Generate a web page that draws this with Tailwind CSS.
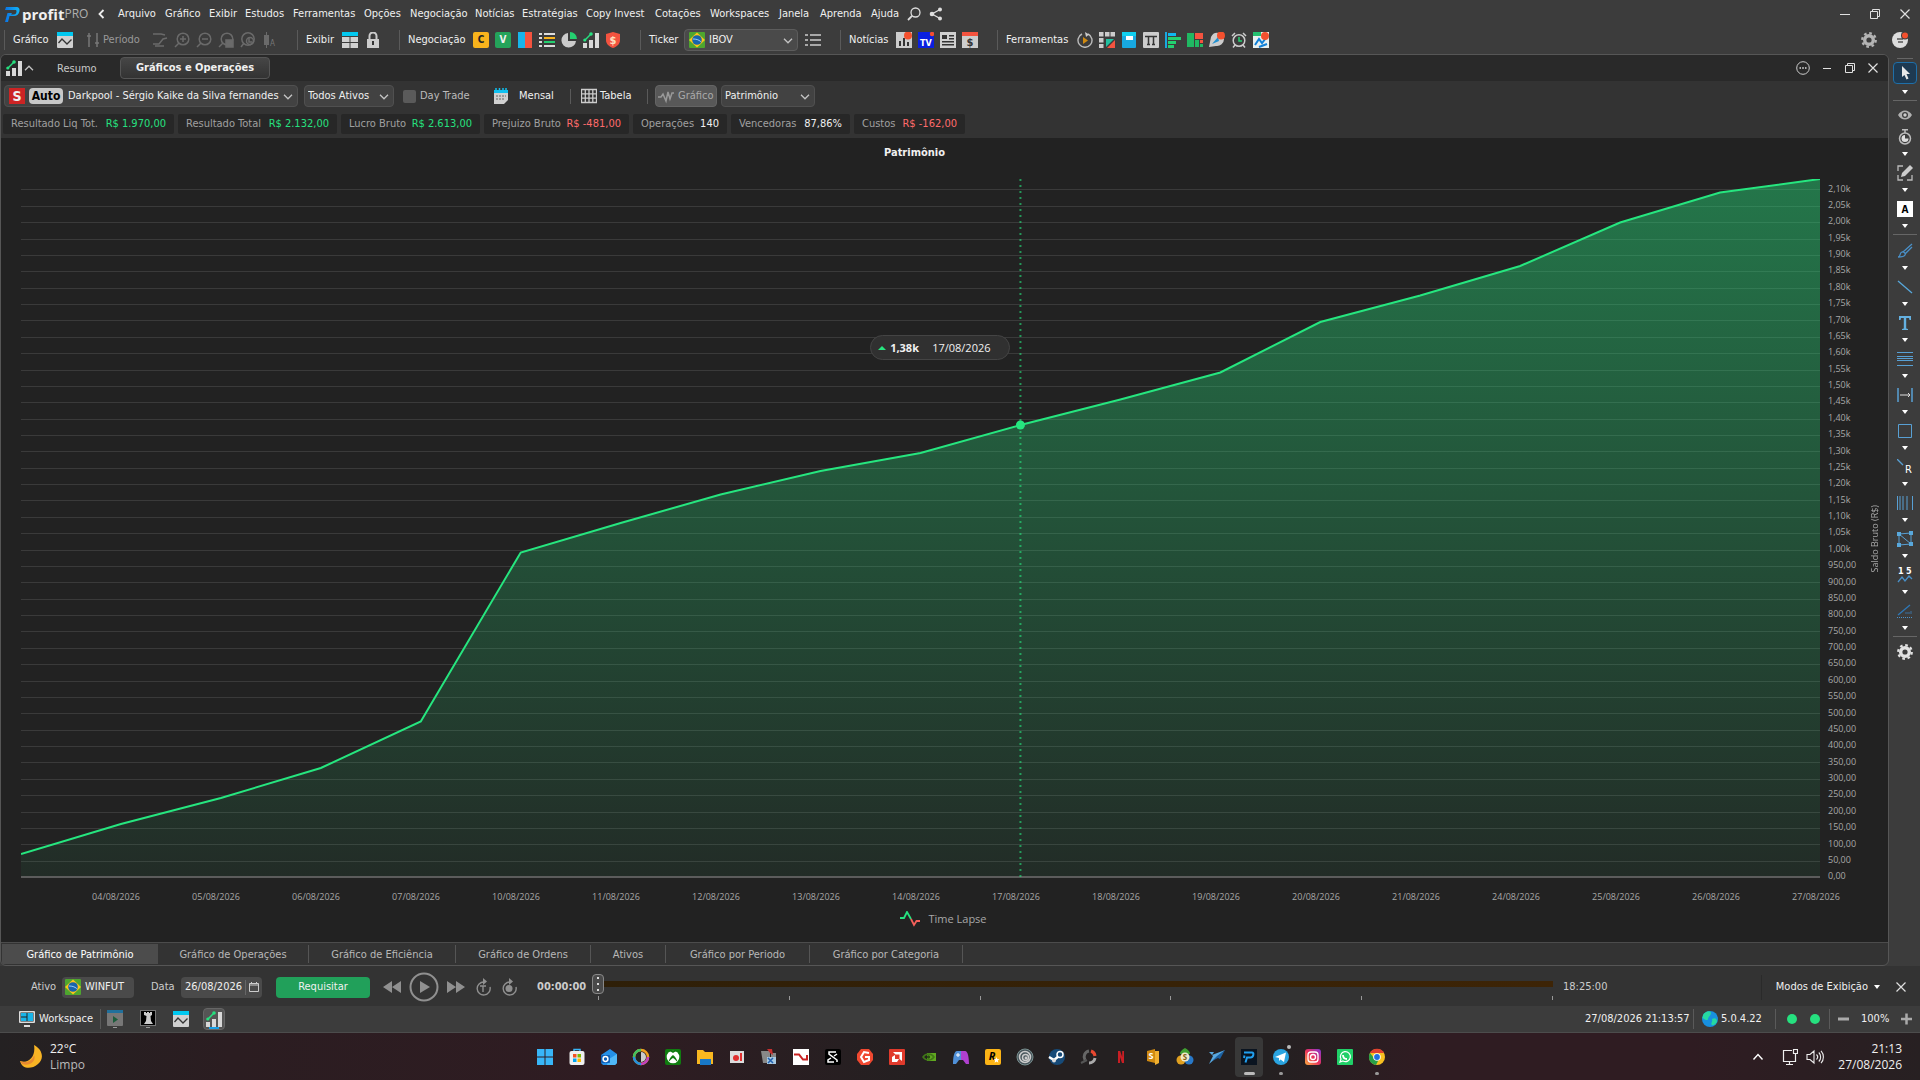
<!DOCTYPE html>
<html lang="pt-BR">
<head>
<meta charset="utf-8">
<title>Profit Pro</title>
<script src="https://cdn.jsdelivr.net/npm/@tailwindcss/browser@4"></script>
</head>
<body class="flex h-screen flex-col overflow-hidden bg-[#3c3c3c] font-['DejaVu_Sans_Condensed','DejaVu_Sans',sans-serif] text-[11px] leading-4 text-[#f0f0f0] whitespace-nowrap [&_svg]:shrink-0">

<svg class="absolute size-0">
  <symbol id="caret" viewBox="0 0 6 4"><path d="M0 0h6L3 4z" fill="#fff"/></symbol>
  <symbol id="chev" viewBox="0 0 10 6"><path d="M1 .8 5 4.8 9 .8" fill="none" stroke="#c4c4c4" stroke-width="1.3"/></symbol>
  <symbol id="flag" viewBox="0 0 16 16"><rect width="16" height="16" rx="1" fill="#4ea62f"/><path d="M8 .5 16 8l-8 7.500L0 8z" fill="#fcc419"/><circle cx="8" cy="8" r="4.800" fill="#1864ab"/><path d="M4 7c3 0 5.500.6 7.800 2.600" stroke="#9cf" fill="none"/></symbol>
  <symbol id="bars" viewBox="0 0 16 16"><path d="M0 11h4v5H0zM6 8h4v8H6zM12 1h4v15h-4z" fill="#d8d8d8"/><path d="M1.500 8.500 7.500 2.500" stroke="#26e07f" stroke-width="1.500"/><circle cx="1.800" cy="8" r="1.600" fill="#26e07f"/><circle cx="8" cy="2" r="1.800" fill="#26e07f"/></symbol>
  <symbol id="wave" viewBox="0 0 16 16"><rect width="16" height="16" rx="1" fill="#d0d0d0"/><path d="M0 0h16v4H0z" fill="#00c8f0"/><path d="M1.500 11 5 7l5 5 4.500-4.500" stroke="#333" stroke-width="1.300" fill="none"/></symbol>
  <symbol id="restore" viewBox="0 0 12 12"><path d="M1.500 3.500h7v7h-7zM3.500 3.500v-2h7v7h-2" fill="none" stroke="#e0e0e0"/></symbol>
  <symbol id="close" viewBox="0 0 12 12"><path d="m1.500 1.500 9 9m0-9-9 9" stroke="#e0e0e0" stroke-width="1.200"/></symbol>
  <symbol id="gear" viewBox="0 0 16 16"><circle cx="8" cy="8" r="4.300" fill="none" stroke="#b4b4b4" stroke-width="3.400"/><circle cx="8" cy="8" r="6.800" fill="none" stroke="#b4b4b4" stroke-width="2.200" stroke-dasharray="2.670"/></symbol>
  <linearGradient id="logo" x1="0" y1="0" x2="1" y2="0"><stop offset="0" stop-color="#0b74e5"/><stop offset="1" stop-color="#12b5f5"/></linearGradient>
</svg>

<!-- Menu bar -->
<header class="flex h-[27px] shrink-0 items-center pt-px">
  <svg class="ml-1 size-4" viewBox="0 0 16 16"><path d="M2 1h10c3 0 4 2 3.400 4.500C14.700 8.500 12.500 10 10 10H5.500L4 16H1l2.500-9H8l-1 1.500h3c1.300 0 2-.8 2.400-2.200C12.800 4.500 12.300 4 11 4H1z" fill="url(#logo)"/></svg>
  <div class="ml-[2px] flex w-[67px] items-center font-['Open_Sans',sans-serif]"><b class="text-[15px] leading-5">profit</b><span class="text-xs text-[#b0b0b0]">PRO</span></div>
  <button aria-label="Recolher menu" class="ml-2"><svg class="h-2.5 w-2" viewBox="0 0 8 10"><path d="M6.500 1 2.500 5l4 4" fill="none" stroke="#eee" stroke-width="1.800"/></svg></button>
  <nav class="ml-[13px] flex">
    <a href="#" class="w-[47px]">Arquivo</a><a href="#" class="w-11">Gráfico</a><a href="#" class="w-9">Exibir</a><a href="#" class="w-12">Estudos</a><a href="#" class="w-[71px]">Ferramentas</a><a href="#" class="w-[46px]">Opções</a><a href="#" class="w-[65px]">Negociação</a><a href="#" class="w-[47px]">Notícias</a><a href="#" class="w-16">Estratégias</a><a href="#" class="w-[69px]">Copy Invest</a><a href="#" class="w-[55px]">Cotações</a><a href="#" class="w-[69px]">Workspaces</a><a href="#" class="w-[41px]">Janela</a><a href="#" class="w-[51px]">Aprenda</a><a href="#" class="w-9">Ajuda</a>
  </nav>
  <button aria-label="Buscar"><svg class="size-3.5" viewBox="0 0 14 14"><circle cx="8.500" cy="5.500" r="4.500" fill="none" stroke="#ddd" stroke-width="1.300"/><path d="M5.300 8.700 1 13" stroke="#ddd" stroke-width="1.800"/></svg></button>
  <button aria-label="Compartilhar" class="ml-2"><svg class="size-3.5" viewBox="0 0 14 14"><path d="M11 2.500 3 7l8 4.500" fill="none" stroke="#ddd" stroke-width="1.300"/><circle cx="11" cy="2.500" r="2" fill="#ddd"/><circle cx="3" cy="7" r="2.300" fill="#ddd"/><circle cx="11" cy="11.500" r="2" fill="#ddd"/></svg></button>
  <div class="mr-[9px] ml-auto flex items-center gap-[18px]">
    <button aria-label="Minimizar"><svg class="size-3" viewBox="0 0 12 12"><path d="M1 6.500h10" stroke="#e0e0e0"/></svg></button>
    <button aria-label="Restaurar"><svg class="size-3"><use href="#restore"/></svg></button>
    <button aria-label="Fechar"><svg class="size-3"><use href="#close"/></svg></button>
  </div>
</header>

<!-- Main toolbar -->
<div class="flex h-[27px] shrink-0 items-center pb-px">
  <i class="ml-1 h-5 w-px bg-[#5a5a5a]"></i>
  <span class="ml-2 w-[44px]">Gráfico</span>
  <svg class="size-4"><use href="#wave"/></svg>
  <svg class="ml-3 size-4" viewBox="0 0 16 16"><path d="M4 1v14M12 1v14M2 4h4M10 11h4" stroke="#777" stroke-width="1.500"/></svg>
  <span class="ml-0.5 w-[49px] text-[#999]">Período</span>
  <div class="flex gap-1.5">
    <svg class="size-4" viewBox="0 0 16 16" fill="none" stroke="#6a6a6a" stroke-width="1.500"><path d="M1 2h8l4 1M15 6 11 7 7 12H1M3 14h9"/></svg>
    <svg class="size-4" viewBox="0 0 16 16" fill="none" stroke="#6a6a6a" stroke-width="1.500"><circle cx="9" cy="7" r="5.800"/><path d="M5 11 1 15M9 4v6M6 7h6"/></svg>
    <svg class="size-4" viewBox="0 0 16 16" fill="none" stroke="#6a6a6a" stroke-width="1.500"><circle cx="9" cy="7" r="5.800"/><path d="M5 11 1 15M6 7h6"/></svg>
    <svg class="size-4" viewBox="0 0 16 16" fill="none" stroke="#6a6a6a" stroke-width="1.500"><circle cx="9" cy="7" r="5.800"/><path d="M5 11 1 15"/><path d="M8 8h7v7H8z" fill="#6a6a6a"/></svg>
    <svg class="size-4" viewBox="0 0 16 16" fill="none" stroke="#6a6a6a" stroke-width="1.500"><circle cx="8" cy="7" r="6.200"/><path d="M4 11 1 15M9 6v4h3"/><circle cx="10" cy="9" r="3.500"/></svg>
    <svg class="size-4" viewBox="0 0 16 16"><path d="M2 3h5v10H2zM4 0h1v16H4z" fill="#6a6a6a"/><text x="8" y="14" font-size="8" fill="#777">A</text></svg>
  </div>
  <i class="ml-[19px] h-5 w-px bg-[#5a5a5a]"></i>
  <span class="ml-2 w-9">Exibir</span>
  <svg class="size-4" viewBox="0 0 16 16"><path d="M0 0h16v4H0z" fill="#00c8f0"/><path d="M0 5h7.500v5H0zM8.500 5H16v5H8.500zM0 11h7.500v5H0zM8.500 11H16v5H8.500z" fill="#d0d0d0"/></svg>
  <svg class="ml-[7px] size-4" viewBox="0 0 16 16"><path d="M2 7h12v9H2z" fill="#ccc"/><path d="M4.500 7V4a3.500 3.500 0 0 1 7 0v3" fill="none" stroke="#ccc" stroke-width="2"/><path d="M8 9v4" stroke="#333" stroke-width="2"/></svg>
  <i class="ml-[18px] h-5 w-px bg-[#5a5a5a]"></i>
  <span class="ml-2 w-[65px]">Negociação</span>
  <div class="flex gap-1.5">
    <b class="size-4 rounded-xs bg-[#f8b31c] text-center text-[10px] text-[#222]">C</b>
    <b class="size-4 rounded-xs bg-[#24a35a] text-center text-[10px]">V</b>
    <svg class="size-4" viewBox="0 0 16 16"><path d="M1 0h7v16H1z" fill="#18b4ea"/><path d="M8 0h7v16H8z" fill="#f4533f"/></svg>
    <svg class="size-4" viewBox="0 0 16 16"><path d="M0 1h3v2H0zM5 1h11v2H5zM0 5h3v2H0zM0 9h3v2H0zM0 13h3v2H0zM5 13h11v2H5z" fill="#ddd"/><path d="M5 5h11v2H5z" fill="#f8b31c"/><path d="M5 9h11v2H5z" fill="#24d070"/></svg>
    <svg class="size-4" viewBox="0 0 16 16"><path d="M7 1v8h8A7.300 7.300 0 1 1 7 1z" fill="#ccc"/><path d="M9 0a7 7 0 0 1 7 7H9z" fill="#24d070"/></svg>
    <svg class="size-4"><use href="#bars"/></svg>
    <svg class="size-4" viewBox="0 0 16 16"><path d="m8 0 7 2v6c0 4-3 6.500-7 8-4-1.500-7-4-7-8V2z" fill="#f4533f"/><text x="8" y="12" text-anchor="middle" font-size="11" font-weight="bold" fill="#ffe0c0">$</text></svg>
  </div>
  <i class="ml-[19px] h-5 w-px bg-[#5a5a5a]"></i>
  <label for="ticker" class="ml-2 w-[35px]">Ticker</label>
  <div class="relative flex h-[22px] w-[114px] items-center rounded border border-[#5c5c5c] bg-[#4a4a4a]">
    <svg class="ml-1 size-4"><use href="#flag"/></svg>
    <select id="ticker" class="ml-1 min-w-0 flex-1 appearance-none outline-none"><option>IBOV</option></select>
    <svg class="pointer-events-none absolute top-[8px] right-1 h-1.5 w-2.5"><use href="#chev"/></svg>
  </div>
  <svg class="ml-[7px] size-4" viewBox="0 0 16 16"><path d="M0 2h3v2H0zM5 2h11v2H5zM0 7h3v2H0zM5 7h11v2H5zM0 12h3v2H0zM5 12h11v2H5z" fill="#a8a8a8"/></svg>
  <i class="ml-[19px] h-5 w-px bg-[#5a5a5a]"></i>
  <span class="ml-2 w-[47px]">Notícias</span>
  <div class="flex gap-1.5">
    <svg class="size-4" viewBox="0 0 16 16"><path d="M0 0h16v16H0z" fill="#ccc"/><path d="M3 9h2v5H3zM7 6h2v8H7zM11 10h2v4h-2z" fill="#333"/><circle cx="12" cy="3.500" r="4" fill="#f4502e"/></svg>
    <svg class="size-4" viewBox="0 0 16 16"><path d="M0 0h16v16H0z" fill="#0a20e0"/><text x="8" y="14" text-anchor="middle" font-size="9" font-weight="bold" fill="#fff">TV</text><circle cx="14" cy="2" r="2.200" fill="#f4502e"/></svg>
    <svg class="size-4" viewBox="0 0 16 16"><path d="M0 0h16v16H0z" fill="#d0d0d0"/><path d="M2 3h5v4H2zM9 3h5v1.500H9zM9 6h5v1.500H9zM2 9h12v1.500H2zM2 12h12v1.500H2z" fill="#333"/></svg>
    <svg class="size-4" viewBox="0 0 16 16"><path d="M0 0h16v16H0z" fill="#ccc"/><path d="M0 0h16v4H0z" fill="#f4533f"/><text x="8" y="14" text-anchor="middle" font-size="11" font-weight="bold" fill="#333">$</text></svg>
  </div>
  <i class="ml-[19px] h-5 w-px bg-[#5a5a5a]"></i>
  <span class="ml-2 w-[71px]">Ferramentas</span>
  <div class="flex gap-1.5">
    <svg class="size-4" viewBox="0 0 16 16"><path d="M5 2a7 7 0 1 0 6 0" fill="none" stroke="#bbb" stroke-width="1.400"/><path d="m8 0 4 2.500L9 5z" fill="#ccc"/><path d="m6 5 5 3.500L6 12z" fill="#d08a10"/></svg>
    <svg class="size-4" viewBox="0 0 16 16"><path d="M0 0h4.500v4.500H0zM6 0h4.500v4.500H6zM11.500 0H16v4.500h-4.500zM0 6h4.500v4.500H0zM0 12h4.500v4H0z" fill="#ccc"/><path d="M7 7h8L7 15z" fill="#22c0a0"/><path d="M16 8v8H8z" fill="#f4533f"/></svg>
    <svg class="size-4" viewBox="0 0 16 16"><rect x="1" width="14" height="16" rx="1" fill="#18a8e0"/><path d="M1 0h14v4H1z" fill="#10d0f0"/><path d="M5 4h7v4H5z" fill="#fff"/></svg>
    <svg class="size-4" viewBox="0 0 16 16"><rect width="16" height="16" rx="1" fill="#ccc"/><path d="M2 4.500h12M5.500 4.500V13M10.500 4.500V13M4 12.500h3M9 12.500h3" stroke="#333" stroke-width="1.500"/></svg>
    <svg class="size-4" viewBox="0 0 16 16"><path d="M0 0h2v16H0z" fill="#18a8e0"/><path d="M3 1h8v3H3z" fill="#10b8f0"/><path d="M3 5h13v3H3zM3 9h8v3H3zM3 13h6v3H3z" fill="#24d070"/></svg>
    <svg class="size-4" viewBox="0 0 16 16"><path d="M0 1h7v14H0z" fill="#20b862"/><path d="M8 1h8v6H8zM13 8h3v3h-3z" fill="#f4533f"/><path d="M8 8h4v7H8zM13 12h3v3h-3z" fill="#20b862"/></svg>
    <svg class="size-4" viewBox="0 0 16 16"><path d="M0 15 2 5a7 7 0 0 1 8-4l5 6a7 7 0 0 1-8 7z" fill="#ccc"/><path d="m3 12 6-7 1 4z" fill="#2090d0"/><circle cx="12" cy="3.500" r="4" fill="#f4502e"/></svg>
    <svg class="size-4" viewBox="0 0 16 16" fill="none" stroke="#ccc" stroke-width="1.500"><circle cx="8" cy="8.500" r="5.800"/><path d="M1 4 4 1M15 4l-3-3M4 13l-2 2.500M12 13l2 2.500"/><path d="M8 5v4h3" stroke="#24d070"/></svg>
    <svg class="size-4" viewBox="0 0 16 16"><path d="M0 0h16v16H0z" fill="#e8f0f0"/><path d="M0 0h8v4H0z" fill="#24c070"/><path d="m2 13 4-6 3 4 4-5M6 15l8-3" stroke="#1080d8" stroke-width="2" fill="none"/><circle cx="12" cy="4" r="4" fill="#f4502e"/></svg>
  </div>
  <div class="mr-3 ml-auto flex items-center gap-[15px]">
    <button aria-label="Configurações"><svg class="size-4"><use href="#gear"/></svg></button>
    <button aria-label="Perfil"><svg class="size-4" viewBox="0 0 16 16"><circle cx="8" cy="8" r="8" fill="#ddd"/><path d="M5 7h6M6 10h5" stroke="#555" stroke-width="1.500"/><circle cx="13" cy="3.500" r="4" fill="#3c3c3c"/><circle cx="13" cy="3.500" r="3" fill="#f4502e"/></svg></button>
  </div>
</div>

<main class="flex min-h-0 flex-1">
  <!-- Report window -->
  <section class="flex min-w-0 flex-1 flex-col overflow-hidden rounded-md border border-[#565656] bg-[#333]">
    <div class="flex h-[26px] shrink-0 items-center bg-[#292929]">
      <svg class="ml-[5px] size-4"><use href="#bars"/></svg>
      <svg class="ml-0.5 h-1.5 w-2.5 rotate-180"><use href="#chev"/></svg>
      <button class="ml-[23px] w-[63px] pt-px text-left text-[#c8c8c8]">Resumo</button>
      <button class="h-[22px] w-[150px] rounded border border-[#555] bg-linear-to-b from-[#464646] to-[#333] font-bold">Gráficos e Operações</button>
      <div class="mr-[9px] ml-auto flex items-center gap-[11px]">
        <button aria-label="Mais"><svg class="size-3.5" viewBox="0 0 14 14"><circle cx="7" cy="7" r="6.300" fill="none" stroke="#ccc"/><path d="M3.500 7h1.500M6.200 7h1.600M9 7h1.500" stroke="#ddd" stroke-width="1.500"/></svg></button>
        <button aria-label="Minimizar janela"><svg class="size-3" viewBox="0 0 12 12"><path d="M2 6.500h8" stroke="#e0e0e0"/></svg></button>
        <button aria-label="Restaurar janela"><svg class="size-3"><use href="#restore"/></svg></button>
        <button aria-label="Fechar janela"><svg class="size-3"><use href="#close"/></svg></button>
      </div>
    </div>

    <div class="flex h-[30px] shrink-0 items-center">
      <div class="relative ml-[3px] flex h-[22px] w-[294px] items-center rounded border border-[#505050] bg-[#424242]">
        <b class="ml-1 size-4 bg-[#cc2424] text-center text-sm leading-4">S</b>
        <b class="ml-1 h-4 w-[34px] rounded bg-[#c8c8c8] text-center text-xs leading-4 text-black">Auto</b>
        <select aria-label="Conta" class="ml-[5px] min-w-0 flex-1 appearance-none outline-none"><option>Darkpool - Sérgio Kaike da Silva fernandes</option></select>
        <svg class="pointer-events-none absolute top-2 right-1 h-1.5 w-2.5"><use href="#chev"/></svg>
      </div>
      <div class="relative ml-1.5 flex h-[22px] w-[90px] items-center rounded border border-[#505050] bg-[#424242]">
        <select aria-label="Ativos" class="ml-[3px] min-w-0 flex-1 appearance-none outline-none"><option>Todos Ativos</option></select>
        <svg class="pointer-events-none absolute top-2 right-1 h-1.5 w-2.5"><use href="#chev"/></svg>
      </div>
      <label class="ml-[9px] flex w-[90px] items-center gap-1 text-[#bbb]"><input type="checkbox" class="size-[13px] appearance-none rounded-xs bg-[#5a5a5a]">Day Trade</label>
      <svg class="size-4" viewBox="0 0 16 16"><path d="M1 2h14v3H1z" fill="#10c0f0"/><path d="M3 0v3M6.500 0v3M10 0v3M13 0v3" stroke="#10c0f0" stroke-width="1.500"/><path d="M1 5h14v7l-4 4H1z" fill="#d0d0d0"/><path d="M3 8h10M3 11h8" stroke="#888" stroke-width="1.500" stroke-dasharray="2 1"/></svg>
      <button class="ml-[10px] w-[51px] text-left">Mensal</button>
      <i class="h-[15px] w-px bg-[#5a5a5a]"></i>
      <button class="ml-2.5 flex items-center gap-[3px]"><svg class="size-4" viewBox="0 0 16 16"><path d="M.5 1.500h15v13H.5zM.5 5.800h15M.5 10.200h15M4.300 1.500v13M8 1.500v13M11.800 1.500v13" fill="none" stroke="#ccc" stroke-width="1.300"/></svg><span class="w-[47px] text-left">Tabela</span></button>
      <i class="h-[15px] w-px bg-[#5a5a5a]"></i>
      <button class="ml-[7px] flex h-[22px] w-[62px] items-center gap-1 rounded border border-[#646464] bg-[#585858] pl-0.5 text-[#aaa]"><svg class="size-4" viewBox="0 0 16 16"><path d="M0 9h3l2-3 3 7 2-9 2 7 2-6h2" fill="none" stroke="#999" stroke-width="1.500"/></svg>Gráfico</button>
      <div class="relative ml-1 flex h-[22px] w-[94px] items-center rounded border border-[#505050] bg-[#424242]">
        <select aria-label="Tipo de gráfico" class="ml-[3px] min-w-0 flex-1 appearance-none outline-none"><option>Patrimônio</option></select>
        <svg class="pointer-events-none absolute top-2 right-1 h-1.5 w-2.5"><use href="#chev"/></svg>
      </div>
    </div>

    <dl class="flex h-[27px] shrink-0 gap-1 pt-[3px] pl-[2px] text-[#a0a0a0] *:flex *:h-5 *:items-center *:justify-between *:rounded-xs *:bg-[#272727] *:px-2">
      <div class="w-[171px]"><dt>Resultado Liq Tot.</dt><dd class="text-[#26e07f]">R$ 1.970,00</dd></div>
      <div class="w-[159px]"><dt>Resultado Total</dt><dd class="text-[#26e07f]">R$ 2.132,00</dd></div>
      <div class="w-[139px]"><dt>Lucro Bruto</dt><dd class="text-[#26e07f]">R$ 2.613,00</dd></div>
      <div class="w-[145px]"><dt>Prejuizo Bruto</dt><dd class="text-[#ff6b6b]">R$ -481,00</dd></div>
      <div class="w-[94px]"><dt>Operações</dt><dd class="text-[#f0f0f0]">140</dd></div>
      <div class="w-[119px]"><dt>Vencedoras</dt><dd class="text-[#f0f0f0]">87,86%</dd></div>
      <div class="w-[111px]"><dt>Custos</dt><dd class="text-[#ff6b6b]">R$ -162,00</dd></div>
    </dl>

    <!-- Equity chart -->
    <div class="flex min-h-0 flex-1 flex-col border-b border-[#4c4c4c] bg-[#222]">
      <h2 class="h-[41px] shrink-0 pt-[7px] pr-[60px] text-center font-bold">Patrimônio</h2>
      <div class="flex min-h-0 flex-1 pl-5">
        <div class="relative min-w-0 flex-1">
          <svg class="block h-full w-full" viewBox="0 0 1800 700" preserveAspectRatio="none">
            <defs><linearGradient id="area" x1="0" y1="0" x2="0" y2="1"><stop offset="0" stop-color="#26e67f" stop-opacity=".43"/><stop offset="1" stop-color="#26e67f" stop-opacity=".05"/></linearGradient></defs>
            <g id="grid" fill="#fff" fill-opacity=".11" shape-rendering="crispEdges"></g>
            <path d="M0 675 100 645 200 619 300 589 400 542.500 500 373.500 600 344 700 315.500 800 292 900 274 1000 246 1100 220.500 1200 193.500 1300 143 1400 116.500 1500 87 1600 43.500 1700 13.500 1800 0V698H0z" fill="url(#area)"/>
            <path d="M0 697h1800v2H0z" fill="#5c5c5c"/>
            <path d="M0 675 100 645 200 619 300 589 400 542.500 500 373.500 600 344 700 315.500 800 292 900 274 1000 246 1100 220.500 1200 193.500 1300 143 1400 116.500 1500 87 1600 43.500 1700 13.500 1800 0" fill="none" stroke="#26e67f" stroke-width="2"/>
            <path d="M1000 0V702" stroke="#26e67f" stroke-opacity=".6" stroke-width="2" stroke-dasharray="2 4"/>
            <circle cx="1000" cy="246" r="4.500" fill="#26e67f"/>
          </svg>
          <div class="absolute top-[22.3%] left-[47.2%] flex h-[25px] w-[140px] items-center rounded-full border border-[#444] bg-[#303030] pl-[7px] font-['Open_Sans',sans-serif]">
            <svg class="h-1 w-2" viewBox="0 0 8 4"><path d="M0 4 4 0l4 4z" fill="#26e67f"/></svg>
            <b class="ml-1 w-[42px]">1,38k</b><span>17/08/2026</span>
          </div>
        </div>
        <div id="ylabels" class="mt-[9px] mb-[3px] ml-2 flex w-[34px] flex-col justify-between font-['Open_Sans',sans-serif] text-[9px] leading-none text-[#a8a8a8] *:flex *:h-0 *:items-center"></div>
        <div class="flex w-[26px] items-center justify-center pt-5"><span class="rotate-180 font-['Open_Sans',sans-serif] text-[9px] text-[#a8a8a8] [writing-mode:vertical-rl]">Saldo Bruto (R$)</span></div>
      </div>
      <div id="xlabels" class="mr-[22px] ml-[65px] flex h-[30px] shrink-0 pt-3 font-['Open_Sans',sans-serif] text-[9px] leading-3 text-[#a8a8a8] *:flex-1 *:text-center"></div>
      <div class="flex h-[33px] shrink-0 items-start justify-center gap-2 pr-[2px] font-['Open_Sans',sans-serif] text-[#a8a8a8]"><svg class="mt-0.5 h-4 w-5" viewBox="0 0 20 16"><path d="M0 7h4l3-6 4 7" fill="none" stroke="#26e07f" stroke-width="1.800"/><path d="m11 8 3 6 2.500-4H20" fill="none" stroke="#f4605a" stroke-width="1.800"/></svg><span class="leading-5">Time Lapse</span></div>
    </div>

    <nav class="flex h-[22px] shrink-0 items-center pl-px text-[#b8b8b8] *:border-[#555] *:pt-0.5">
      <button class="h-5 w-[156px] bg-[#4c4c4c] text-white">Gráfico de Patrimônio</button>
      <button class="w-[151px] border-r">Gráfico de Operações</button>
      <button class="w-[147px] border-r">Gráfico de Eficiência</button>
      <button class="w-[135px] border-r">Gráfico de Ordens</button>
      <button class="w-[75px] border-r">Ativos</button>
      <button class="w-36 border-r">Gráfico por Periodo</button>
      <button class="w-[153px] border-r">Gráfico por Categoria</button>
    </nav>
  </section>

  <!-- Drawing tools -->
  <aside class="flex w-[31px] shrink-0 flex-col items-center">
    <i class="mt-1 h-px w-4 bg-[#666]"></i>
    <button aria-label="Cursor" class="mt-[3px] flex h-[22px] w-6 items-center justify-center rounded-sm border border-[#1f6fa8] bg-[#1e3a52]"><svg class="size-3.5" viewBox="0 0 14 14"><path d="m4 0 8 8H8.500l2 4.500-2 1L6.500 9 4 11z" fill="#e8e8e8"/></svg></button>
    <svg class="mt-[6px] h-1 w-1.5"><use href="#caret"/></svg>
    <i class="mt-1.5 h-px w-6 bg-[#666]"></i>
    <button aria-label="Ocultar" class="mt-1.5"><svg class="block size-4" viewBox="0 0 16 16"><path d="M1 8c3.500-6 10.500-6 14 0-3.500 6-10.500 6-14 0z" fill="#b0b0b0"/><circle cx="8" cy="8" r="3" fill="#3c3c3c"/><circle cx="8" cy="8" r="1.700" fill="#ccc"/></svg></button>
    <div class="mt-1.5 flex flex-col items-center gap-[7px] [&_button_svg]:block [&_button_svg]:size-4 [&>svg]:mb-0.5 [&>svg]:h-1 [&>svg]:w-1.5">
      <button aria-label="Temporizador"><svg viewBox="0 0 16 16"><circle cx="8" cy="9.500" r="5.500" fill="none" stroke="#bbb" stroke-width="1.500"/><path d="M8 6v3.500h3.500A3.500 3.500 0 1 1 8 6z" fill="#ddd"/><path d="M5 .8h6M8 1v3" stroke="#bbb" stroke-width="1.500"/></svg></button><svg><use href="#caret"/></svg>
      <button aria-label="Editar"><svg viewBox="0 0 16 16"><path d="M1 6V1h5M1 10v5h5M10 15h5v-5" fill="none" stroke="#bbb" stroke-width="1.300"/><path d="m13 0 3 3-8 8-4 1 1-4z" fill="#ccc"/></svg></button><svg><use href="#caret"/></svg>
      <button aria-label="Automático"><svg viewBox="0 0 16 16"><path d="M0 0h16v16H0z" fill="#fff"/><text x="8" y="12" text-anchor="middle" font-size="10" font-weight="bold">A</text></svg></button><svg><use href="#caret"/></svg>
    </div>
    <i class="mt-1 h-px w-6 shrink-0 bg-[#666]"></i>
    <div class="mt-2 flex flex-col items-center gap-[7px] [&_button_svg]:block [&_button_svg]:size-4 [&>svg]:mb-0.5 [&>svg]:h-1 [&>svg]:w-1.5">
      <button aria-label="Pincel"><svg viewBox="0 0 16 16" fill="none" stroke="#4a90c8" stroke-width="1.300"><path d="M15 1 6 9M15 4l-7 7M1 14c3 0 1-4 4-5 2-.5 4 1.500 3 3-1 2-4 2-7 2z"/></svg></button><svg><use href="#caret"/></svg>
      <button aria-label="Linha"><svg viewBox="0 0 16 16"><path d="m1 2 14 12" stroke="#58a8dc" stroke-width="1.300"/></svg></button><svg><use href="#caret"/></svg>
      <button aria-label="Texto"><svg viewBox="0 0 16 16"><path d="M2 1h12v4h-1.500l-.5-2H9.200v10.500l1.800.5v1H5v-1l1.800-.5V3H4l-.5 2H2z" fill="#64b0e0"/></svg></button><svg><use href="#caret"/></svg>
      <button aria-label="Retrações"><svg viewBox="0 0 16 16"><path d="M0 1.500h16M0 5.500h16M0 7.500h16M0 9.500h16M0 14.500h16" stroke="#58a0d4" stroke-width="1.100"/></svg></button><svg><use href="#caret"/></svg>
      <button aria-label="Régua"><svg viewBox="0 0 16 16"><path d="M1 1v14M15 1v14" stroke="#58a0d4" stroke-width="1.500"/><path d="M3 8h10M11 6l2 2-2 2" stroke="#ddd" fill="none"/></svg></button><svg><use href="#caret"/></svg>
      <button aria-label="Retângulo"><svg viewBox="0 0 16 16"><path d="M1.500 1.500h13v13h-13z" fill="none" stroke="#58a0d4"/></svg></button><svg><use href="#caret"/></svg>
      <button aria-label="Regressão"><svg viewBox="0 0 16 16"><path d="m0 0 6 6" stroke="#58a0d4" stroke-width="1.300"/><text x="8" y="14" font-size="11" fill="#fff">R</text></svg></button><svg><use href="#caret"/></svg>
      <button aria-label="Ciclos"><svg viewBox="0 0 16 16"><path d="M.5 1v14M3 1v14M6 1v14M10 1v14M15.500 1v14" stroke="#58a0d4"/></svg></button><svg><use href="#caret"/></svg>
      <button aria-label="Harmônico"><svg viewBox="0 0 16 16"><path d="M2 3 14 2 14 13 2 14zM2 3l12 10" fill="none" stroke="#58a0d4"/><path d="M0 1h4v4H0zM12 0h4v4h-4zM12 11h4v4h-4zM0 12h4v4H0z" fill="#58a8dc"/></svg></button><svg><use href="#caret"/></svg>
      <button aria-label="Ondas de Elliott"><svg viewBox="0 0 16 16"><path d="m1 15 4-5 3 4 4-5 3 3" fill="none" stroke="#4a90c8" stroke-width="1.300"/><text x="1" y="7" font-size="9" font-weight="bold" fill="#fff">1</text><text x="9" y="7" font-size="9" font-weight="bold" fill="#fff">5</text></svg></button><svg><use href="#caret"/></svg>
      <button aria-label="Ângulo"><svg viewBox="0 0 16 16"><path d="M1 12 13 2" stroke="#2f78b8" stroke-width="1.300"/><path d="M0 14.500h16" stroke="#4a90c8" stroke-dasharray="1 1"/><path d="M8 10h5M14 8v3" stroke="#3a70a0"/></svg></button><svg><use href="#caret"/></svg>
    </div>
    <i class="mt-1 h-px w-6 shrink-0 bg-[#666]"></i>
    <button aria-label="Opções" class="mt-[7px]"><svg class="block size-4 brightness-125"><use href="#gear"/></svg></button>
  </aside>
</main>

<!-- Replay bar -->
<div class="flex h-10 shrink-0 items-center bg-[#333] pt-0.5">
  <span class="ml-[31px] w-[31px] text-[#ccc]">Ativo</span>
  <button class="flex h-[21px] w-[72px] items-center gap-1 rounded bg-[#4a4a4a] pl-[3px]"><svg class="size-4"><use href="#flag"/></svg>WINFUT</button>
  <label for="date" class="ml-[17px] w-[30px] text-[#ccc]">Data</label>
  <div class="flex h-[21px] w-[81px] items-center rounded bg-[#4a4a4a]"><input id="date" value="26/08/2026" class="ml-1 w-[60px] min-w-0 outline-none"><i class="h-[15px] w-px bg-[#666]"></i><svg class="ml-[3px] size-2.5" viewBox="0 0 10 10"><path d="M.5 1.500h9v8h-9zM2.500 0v2M7.500 0v2M.5 3h9" fill="none" stroke="#ccc"/></svg></div>
  <button class="ml-3.5 h-[21px] w-[94px] rounded bg-[#21a05a]">Requisitar</button>
  <button aria-label="Retroceder" class="ml-[13px]"><svg class="h-3 w-[18px]" viewBox="0 0 18 12"><path d="M9 0v12L0 6zM18 0v12L9 6z" fill="#909090"/></svg></button>
  <button aria-label="Reproduzir" class="ml-2"><svg class="size-[30px]" viewBox="0 0 30 30"><circle cx="15" cy="15" r="13.500" fill="none" stroke="#909090" stroke-width="2"/><path d="m11 9 10 6-10 6z" fill="#909090"/></svg></button>
  <button aria-label="Avançar" class="ml-2"><svg class="h-3 w-[18px]" viewBox="0 0 18 12"><path d="M0 0v12l9-6zM9 0v12l9-6z" fill="#909090"/></svg></button>
  <button aria-label="Próximo negócio" class="ml-2.5"><svg class="h-[18px] w-4" viewBox="0 0 16 18"><path d="M9 4a6.500 6.500 0 1 0 6 5M5 8h6M8 8v6" fill="none" stroke="#909090" stroke-width="1.400"/><path d="m8 0 4 3.500L8 7z" fill="#909090"/></svg></button>
  <button aria-label="Próximo intervalo" class="ml-2.5"><svg class="h-[18px] w-4" viewBox="0 0 16 18"><path d="M9 4a6.500 6.500 0 1 0 6 5" fill="none" stroke="#909090" stroke-width="1.400"/><circle cx="8" cy="10.500" r="3.500" fill="#909090"/><path d="m8 0 4 3.500L8 7z" fill="#909090"/></svg></button>
  <b class="ml-5 w-[55px] text-[#ccc]">00:00:00</b>
  <div class="w-[961px] min-w-0 shrink">
    <input aria-label="Posição do replay" type="range" min="0" max="100" value="0" class="block h-5 w-full appearance-none bg-transparent [&::-webkit-slider-runnable-track]:h-1.5 [&::-webkit-slider-runnable-track]:bg-linear-to-r [&::-webkit-slider-runnable-track]:from-[#2e1f08] [&::-webkit-slider-runnable-track]:to-[#3d2406] [&::-webkit-slider-thumb]:-mt-[7px] [&::-webkit-slider-thumb]:h-5 [&::-webkit-slider-thumb]:w-3 [&::-webkit-slider-thumb]:appearance-none [&::-webkit-slider-thumb]:rounded-sm [&::-webkit-slider-thumb]:border [&::-webkit-slider-thumb]:border-[#888] [&::-webkit-slider-thumb]:bg-[#4a4a4a] [&::-webkit-slider-thumb]:bg-[radial-gradient(circle,#ddd_1px,transparent_1px)] [&::-webkit-slider-thumb]:bg-size-[10px_6px]">
    <div class="mt-0.5 flex justify-between pl-1.5 *:h-1 *:w-px *:bg-[#999]"><i></i><i></i><i></i><i></i><i></i><i></i></div>
  </div>
  <span class="ml-[10px] text-[#ccc]">18:25:00</span>
  <div class="mr-[13px] ml-auto flex items-center">
    <i class="h-[25px] w-px bg-[#2a2a2a]"></i>
    <button class="ml-3.5 flex items-center gap-1.5">Modos de Exibição<svg class="h-1 w-1.5"><use href="#caret"/></svg></button>
    <button aria-label="Fechar replay" class="ml-[15px]"><svg class="size-3"><use href="#close"/></svg></button>
  </div>
</div>

<!-- Workspace status bar -->
<div class="flex h-[27px] shrink-0 items-center border-b border-[#4c4c4c] bg-[#3c3c3c]">
  <svg class="ml-[19px] size-4" viewBox="0 0 16 16"><rect width="16" height="12" rx="1" fill="#ddd"/><path d="M1.500 1.500h13v9h-13z" fill="#222"/><path d="M2 2h5.500v3.500H2zM8.500 2H14v8H8.500zM2 6.500h5.500V10H2z" fill="#18b4ea"/><path d="M5 14h6v2H5z" fill="#ddd"/></svg>
  <button class="ml-1 w-[61px] text-left">Workspace</button>
  <i class="h-5 w-px bg-[#5a5a5a]"></i>
  <svg class="ml-1.5 h-[18px] w-4" viewBox="0 0 16 18"><rect width="16" height="16" rx="1" fill="#777"/><path d="M0 0h16v3H0z" fill="#20709c"/><path d="m6 6 5 3.500L6 13z" fill="#1c5c3c"/><path d="M6 17h4v1H6z" fill="#999"/></svg>
  <svg class="ml-[17px] h-[18px] w-4" viewBox="0 0 16 18"><rect x=".5" y=".5" width="15" height="15" fill="#000" stroke="#777"/><path d="M4 2h2v1h1V2h2v1h1V2h2v3l-1.500 1 .5 5 2 3H4l2-3 .5-5L4 5z" fill="#ccc"/><path d="M6 17h4v1H6z" fill="#999"/></svg>
  <svg class="ml-[17px] size-4"><use href="#wave"/></svg>
  <button aria-label="Gráficos e Operações" class="ml-3.5 flex h-[22px] w-[22px] flex-col items-center justify-end rounded border border-[#666] bg-[#555]"><svg class="size-4"><use href="#bars"/></svg><i class="h-0.5 w-2.5 bg-[#18a0e8]"></i></button>
  <div class="mr-2 ml-auto flex items-center">
    <span class="w-[108px]">27/08/2026 21:13:57</span>
    <i class="h-5 w-px bg-[#5a5a5a]"></i>
    <svg class="ml-2 size-4" viewBox="0 0 16 16"><circle cx="8" cy="8" r="8" fill="#1890e0"/><path d="M1 4c3-5 8-4.500 8-2S6 6 6 8 3 9 .5 7zM10 8c3-2 5 0 5 2s-3 5-5 4 1-3 0-6z" fill="#26d8a0"/></svg>
    <span class="ml-[3px] w-[54px]">5.0.4.22</span>
    <i class="h-5 w-px bg-[#5a5a5a]"></i>
    <i class="ml-[11px] size-2.5 rounded-full bg-[#26e07f]"></i>
    <i class="ml-[13px] size-2.5 rounded-full bg-[#26e07f]"></i>
    <i class="ml-[9px] h-5 w-px bg-[#5a5a5a]"></i>
    <button aria-label="Reduzir" class="ml-2"><svg class="h-3 w-[11px]" viewBox="0 0 11 12"><path d="M0 6h11" stroke="#aaa" stroke-width="3"/></svg></button>
    <span class="ml-3 w-[40px]">100%</span>
    <button aria-label="Ampliar"><svg class="h-3 w-[11px]" viewBox="0 0 11 12"><path d="M0 6h11M5.500 .5v11" stroke="#aaa" stroke-width="2.500"/></svg></button>
  </div>
</div>

<!-- Windows taskbar -->
<footer class="relative flex h-[47px] shrink-0 items-center bg-[linear-gradient(90deg,#242122_0%,#2b1d21_12%,#2f1c22_32%,#242021_48%,#242021_66%,#2f1c22_74%,#2f1c22_88%,#272022_100%)] font-['Open_Sans',sans-serif] text-xs">
  <div class="flex flex-1 items-center">
    <svg class="ml-5 h-6 w-[22px]" viewBox="0 0 22 24"><path d="M14 0c8 4 11 13 4 19S2 24 0 16c9 3 16-5 14-16z" fill="#f8b424"/><path d="M0 16c7 3 13-1 14-6 3 6-5 12-12 9z" fill="#e88a30"/></svg>
    <div class="ml-2">22°C<br><span class="text-[#bbb]">Limpo</span></div>
  </div>
  <div class="flex items-center gap-3 pl-[2px] [&_svg]:block [&_svg]:size-5">
    <svg viewBox="0 0 20 20"><path d="M2 2h7.500v7.500H2zM10.500 2H18v7.500h-7.500zM2 10.500h7.500V18H2zM10.500 10.500H18V18h-7.500z" fill="#38b6f8"/></svg>
    <svg viewBox="0 0 20 20"><path d="M7 5V2.500h6V5" fill="none" stroke="#38b6f8" stroke-width="1.500"/><rect x="2.500" y="4" width="15" height="14" rx="2" fill="#eee"/><path d="M6 7h3.500v3.500H6z" fill="#f25022"/><path d="M10.500 7H14v3.500h-3.500z" fill="#7fba00"/><path d="M6 11.500h3.500V15H6z" fill="#00a4ef"/><path d="M10.500 11.500H14V15h-3.500z" fill="#ffb900"/></svg>
    <svg viewBox="0 0 20 20"><path d="m2 8 9-6 7 5v9l-2 2H4l-2-2z" fill="#2490e8"/><path d="m10 12 8-5v9l-2 2H8z" fill="#50b8f8"/><rect x="2" y="8" width="9" height="8" rx="1" fill="#0f60b8"/><circle cx="6.500" cy="12" r="2.400" fill="none" stroke="#fff" stroke-width="1.500"/></svg>
    <svg viewBox="0 0 20 20"><circle cx="10" cy="10" r="7" fill="none" stroke="#f0a020" stroke-width="2.500"/><path d="M10 3a7 7 0 0 0-7 7" fill="none" stroke="#40c060" stroke-width="2.500"/><path d="M3 10a7 7 0 0 0 7 7" fill="none" stroke="#2090e0" stroke-width="2.500"/><path d="M10 17a7 7 0 0 0 7-7" fill="none" stroke="#c040c0" stroke-width="2.500"/><circle cx="10" cy="10" r="5" fill="#222"/><path d="M10 5a5 5 0 0 1 0 10z" fill="#ccc"/></svg>
    <svg viewBox="0 0 20 20"><rect x="2" y="2" width="16" height="16" rx="2" fill="#107c10"/><circle cx="10" cy="10" r="6.300" fill="#fff"/><path d="M5.300 15.200C6 12 8 9.500 10 8c2 1.500 4 4 4.700 7.200C13 13.300 11.500 12 10 11c-1.500 1-3 2.300-4.700 4.200zM6.300 4.500c1.500 0 2.700.7 3.700 1.500 1-.8 2.200-1.500 3.700-1.500-2.500-1.300-5-1.300-7.400 0z" fill="#107c10"/></svg>
    <svg viewBox="0 0 20 20"><path d="M2 3h6l2 2h8v12H2z" fill="#f8b820"/><path d="M5 12h11v6H5z" fill="#1878c8"/></svg>
    <svg viewBox="0 0 20 20"><path d="M3 4h14v12H3z" fill="#ddd"/><circle cx="9" cy="11" r="3" fill="#e03030"/><path d="M13 6h2v8h-2z" fill="#e03030"/></svg>
    <svg viewBox="0 0 20 20"><path d="M2 4h9v12H4zM12 6h5v6h-5z" fill="#888"/><path d="M8 2h5l1 6-3-2z" fill="#c83030"/><path d="M8 10h9v7H8z" fill="#a8c8e0"/><path d="m9 11 5 5m0-5-5 5" stroke="#2060b0" stroke-width="1.500"/></svg>
    <svg viewBox="0 0 20 20"><path d="M2 2h16v16H2z" fill="#fff"/><path d="M3 7.500h5l4 5h4V8" fill="none" stroke="#c82020" stroke-width="2"/></svg>
    <svg viewBox="0 0 20 20"><rect x="2" y="2" width="16" height="16" rx="2" fill="#000"/><path d="M13 5H6v2l8 6v2M14 7l-3 2M8 11l-3 2v2h6" fill="none" stroke="#fff" stroke-width="1.500"/></svg>
    <svg viewBox="0 0 20 20"><path d="M6 2h8l4 5v6l-4 5H6l-4-5V7z" fill="#f04830"/><path d="M14 6 9 5l-3 5 3 5 5-2v-3h-4" fill="none" stroke="#fff" stroke-width="2"/></svg>
    <svg viewBox="0 0 20 20"><rect x="2" y="2" width="16" height="16" rx="1" fill="#e03a2c"/><path d="M6 5h9v9l-2.500-2V7.500H8.500z" fill="#fff"/><path d="M5 15v-5l3-2v4h4l-2 3z" fill="#fff"/></svg>
    <svg viewBox="0 0 20 20"><path d="M8 6h9v8H8z" fill="#60a820"/><path d="M4 10c3-4 8-4 11 0-3 4-8 4-11 0z" fill="none" stroke="#407818" stroke-width="1.500"/><circle cx="9.500" cy="10" r="1.700" fill="#284c10"/></svg>
    <svg viewBox="0 0 20 20"><path d="M2 17c0-6 1-13 4-13h4v9H8l-3 4z" fill="#5090d8"/><path d="M18 17c0-6-1-13-4-13h-4v9h2l3 4z" fill="#b040d0"/><path d="M5 8h4M7 6v4" stroke="#fff"/></svg>
    <svg viewBox="0 0 20 20"><rect x="2" y="2" width="16" height="16" rx="2" fill="#fcb416"/><text x="9" y="13" text-anchor="middle" font-size="11" font-weight="bold" font-style="italic">R</text><path d="m13.500 10 .8 2 2.200.2-1.700 1.300.6 2.200-1.900-1.200-1.900 1.200.6-2.200-1.700-1.300 2.200-.2z" fill="#fff"/></svg>
    <svg viewBox="0 0 20 20" fill="none" stroke="#ccc" stroke-width="1.500"><circle cx="10" cy="10" r="8" fill="#48565c" stroke="#7a9090" stroke-width="1"/><circle cx="10" cy="10" r="5.500"/><circle cx="10.500" cy="10.500" r="3"/><circle cx="11" cy="11" r=".7"/></svg>
    <svg viewBox="0 0 20 20"><circle cx="10" cy="10" r="8" fill="#164a78"/><path d="m2 10 5 3 5-4" stroke="#fff" stroke-width="2.500" fill="none"/><circle cx="13" cy="7.500" r="3" fill="#164a78" stroke="#fff" stroke-width="1.500"/><circle cx="7" cy="13.500" r="2" fill="#ddd"/></svg>
    <svg viewBox="0 0 20 20" fill="none" stroke-width="3"><path d="M6 13a6 6 0 0 1 4-9" stroke="#666"/><path d="M12 4a6 6 0 0 1 4 5" stroke="#e84830"/><path d="M16 11a6 6 0 0 1-6 5" stroke="#aaa"/><path d="m2 16 6-3" stroke="#555" stroke-width="2"/></svg>
    <svg viewBox="0 0 20 20"><path d="M7 4h2.200l2 6V4H13v12h-2l-2-6v6H7z" fill="#c81e24"/></svg>
    <svg viewBox="0 0 20 20"><path d="m4 4 8-2v14l-8-2z" fill="#d08a10"/><path d="M12 4h4v12l-4 2z" fill="#f0b030"/><text x="8" y="12" text-anchor="middle" font-size="9" font-weight="bold" fill="#fff">S</text></svg>
    <svg viewBox="0 0 20 20"><path d="M10 1c3 2 5 3 5 6H5c0-3 2-4 5-6z" fill="#40a030"/><circle cx="6" cy="13" r="4.500" fill="#e0a020"/><circle cx="14" cy="13" r="4.500" fill="#2878c8"/><circle cx="10" cy="10" r="4.500" fill="#f0e8c8"/><text x="10" y="13" text-anchor="middle" font-size="8" font-weight="bold" fill="#806010">S</text></svg>
    <svg viewBox="0 0 20 20"><path d="M2 5h5l-2 3 13-5-9 8-7 6 4-8z" fill="#58a8e0"/><path d="m5 14 5-5 8-6-5 9-2-1z" fill="#1c60a0"/></svg>
    <div class="relative -mx-1 flex h-10 w-7 items-center justify-center rounded bg-[#383838]"><svg viewBox="0 0 20 20"><path d="M2 2h16v16H2z" fill="#0a1420"/><path d="M5 5.500h8c2.500 0 1.500 5-1.500 5H8l-1.500 5M5.500 8.500 5 11" fill="none" stroke="#20a0f0" stroke-width="2"/></svg><i class="absolute bottom-0.5 h-[3px] w-[11px] rounded-full bg-[#bbb]"></i></div>
    <div class="relative flex h-10 items-center"><svg viewBox="0 0 20 20"><circle cx="10" cy="10" r="8" fill="#2aa4e0"/><path d="m4 10 11-4.500L13 15l-3.500-2.500L8 14v-3z" fill="#fff"/></svg><i class="absolute top-2 right-0 size-1 rounded-full bg-[#bbb]"></i><i class="absolute bottom-0.5 left-2 h-[3px] w-1 rounded-full bg-[#999]"></i></div>
    <svg viewBox="0 0 20 20"><defs><linearGradient id="ig" x1="0" y1="1" x2="1" y2="0"><stop offset="0" stop-color="#fdb040"/><stop offset=".5" stop-color="#e8305c"/><stop offset="1" stop-color="#8038d8"/></linearGradient></defs><rect x="2" y="2" width="16" height="16" rx="3" fill="url(#ig)"/><rect x="5" y="5" width="10" height="10" rx="3" fill="none" stroke="#fff" stroke-width="1.300"/><circle cx="10" cy="10" r="2.500" fill="none" stroke="#fff" stroke-width="1.300"/></svg>
    <svg viewBox="0 0 20 20"><rect x="2" y="2" width="16" height="16" rx="1" fill="#20d068"/><path d="m5 15 1-3a5 5 0 1 1 2 2z" fill="none" stroke="#fff" stroke-width="1.200"/><path d="M8 8c0 3 2 4 4 4" stroke="#fff" stroke-width="1.800" fill="none"/></svg>
    <div class="relative flex h-10 items-center"><svg viewBox="0 0 20 20"><circle cx="10" cy="10" r="8" fill="#f8c020"/><path d="M3 6a8 8 0 0 1 14 0H10z" fill="#e04030"/><path d="M3 6a8 8 0 0 0 6 12l3-6-5-1z" fill="#28a048"/><circle cx="10" cy="10" r="3.800" fill="#fff"/><circle cx="10" cy="10" r="2.900" fill="#2070e0"/></svg><i class="absolute bottom-0.5 left-2 h-[3px] w-1 rounded-full bg-[#999]"></i></div>
  </div>
  <div class="flex flex-1 items-center justify-end">
    <svg class="size-3" viewBox="0 0 12 12"><path d="m1.500 8.500 4.500-5 4.500 5" fill="none" stroke="#fff" stroke-width="1.400"/></svg>
    <svg class="ml-[18px] h-[18px] w-4" viewBox="0 0 16 18"><path d="M10 2.500H1.500v11h12V9M4 16.500h7M7.500 13.500v3M11.500 1.500h4v4h-4zM13.500 5.500V9" fill="none" stroke="#eee" stroke-width="1.200"/></svg>
    <svg class="ml-2 h-4 w-[18px]" viewBox="0 0 18 16"><path d="M1 5.500h3L8 2v12l-4-3.500H1zM10.500 5.500c1.500 1.500 1.500 3.500 0 5M12.800 3.500c2.500 2.500 2.500 6.500 0 9M15 1.800c3.200 3.500 3.200 8.900 0 12.400" fill="none" stroke="#eee" stroke-width="1.100"/></svg>
    <div class="mr-[18px] ml-2 w-[70px] text-right leading-4">21:13<br>27/08/2026</div>
  </div>
</footer>

<script>
  const TOP = 2100, STEP = 50, BASE = 698, UNIT = 0.3274;
  const grid = document.getElementById('grid');
  const ylabels = document.getElementById('ylabels');
  for (let v = TOP; v >= 0; v -= STEP) {
    if (v > 0) {
      const r = document.createElementNS('http://www.w3.org/2000/svg', 'rect');
      r.setAttribute('y', Math.round(BASE - v * UNIT));
      r.setAttribute('width', 1800);
      r.setAttribute('height', 1);
      grid.append(r);
    }
    const s = document.createElement('span');
    s.textContent = v >= 1000 ? (v / 1000).toFixed(2).replace('.', ',') + 'k' : v.toFixed(2).replace('.', ',');
    ylabels.append(s);
  }
  const xlabels = document.getElementById('xlabels');
  for (const d of [4, 5, 6, 7, 10, 11, 12, 13, 14, 17, 18, 19, 20, 21, 24, 25, 26, 27]) {
    const s = document.createElement('span');
    s.textContent = String(d).padStart(2, '0') + '/08/2026';
    xlabels.append(s);
  }
</script>
</body>
</html>
